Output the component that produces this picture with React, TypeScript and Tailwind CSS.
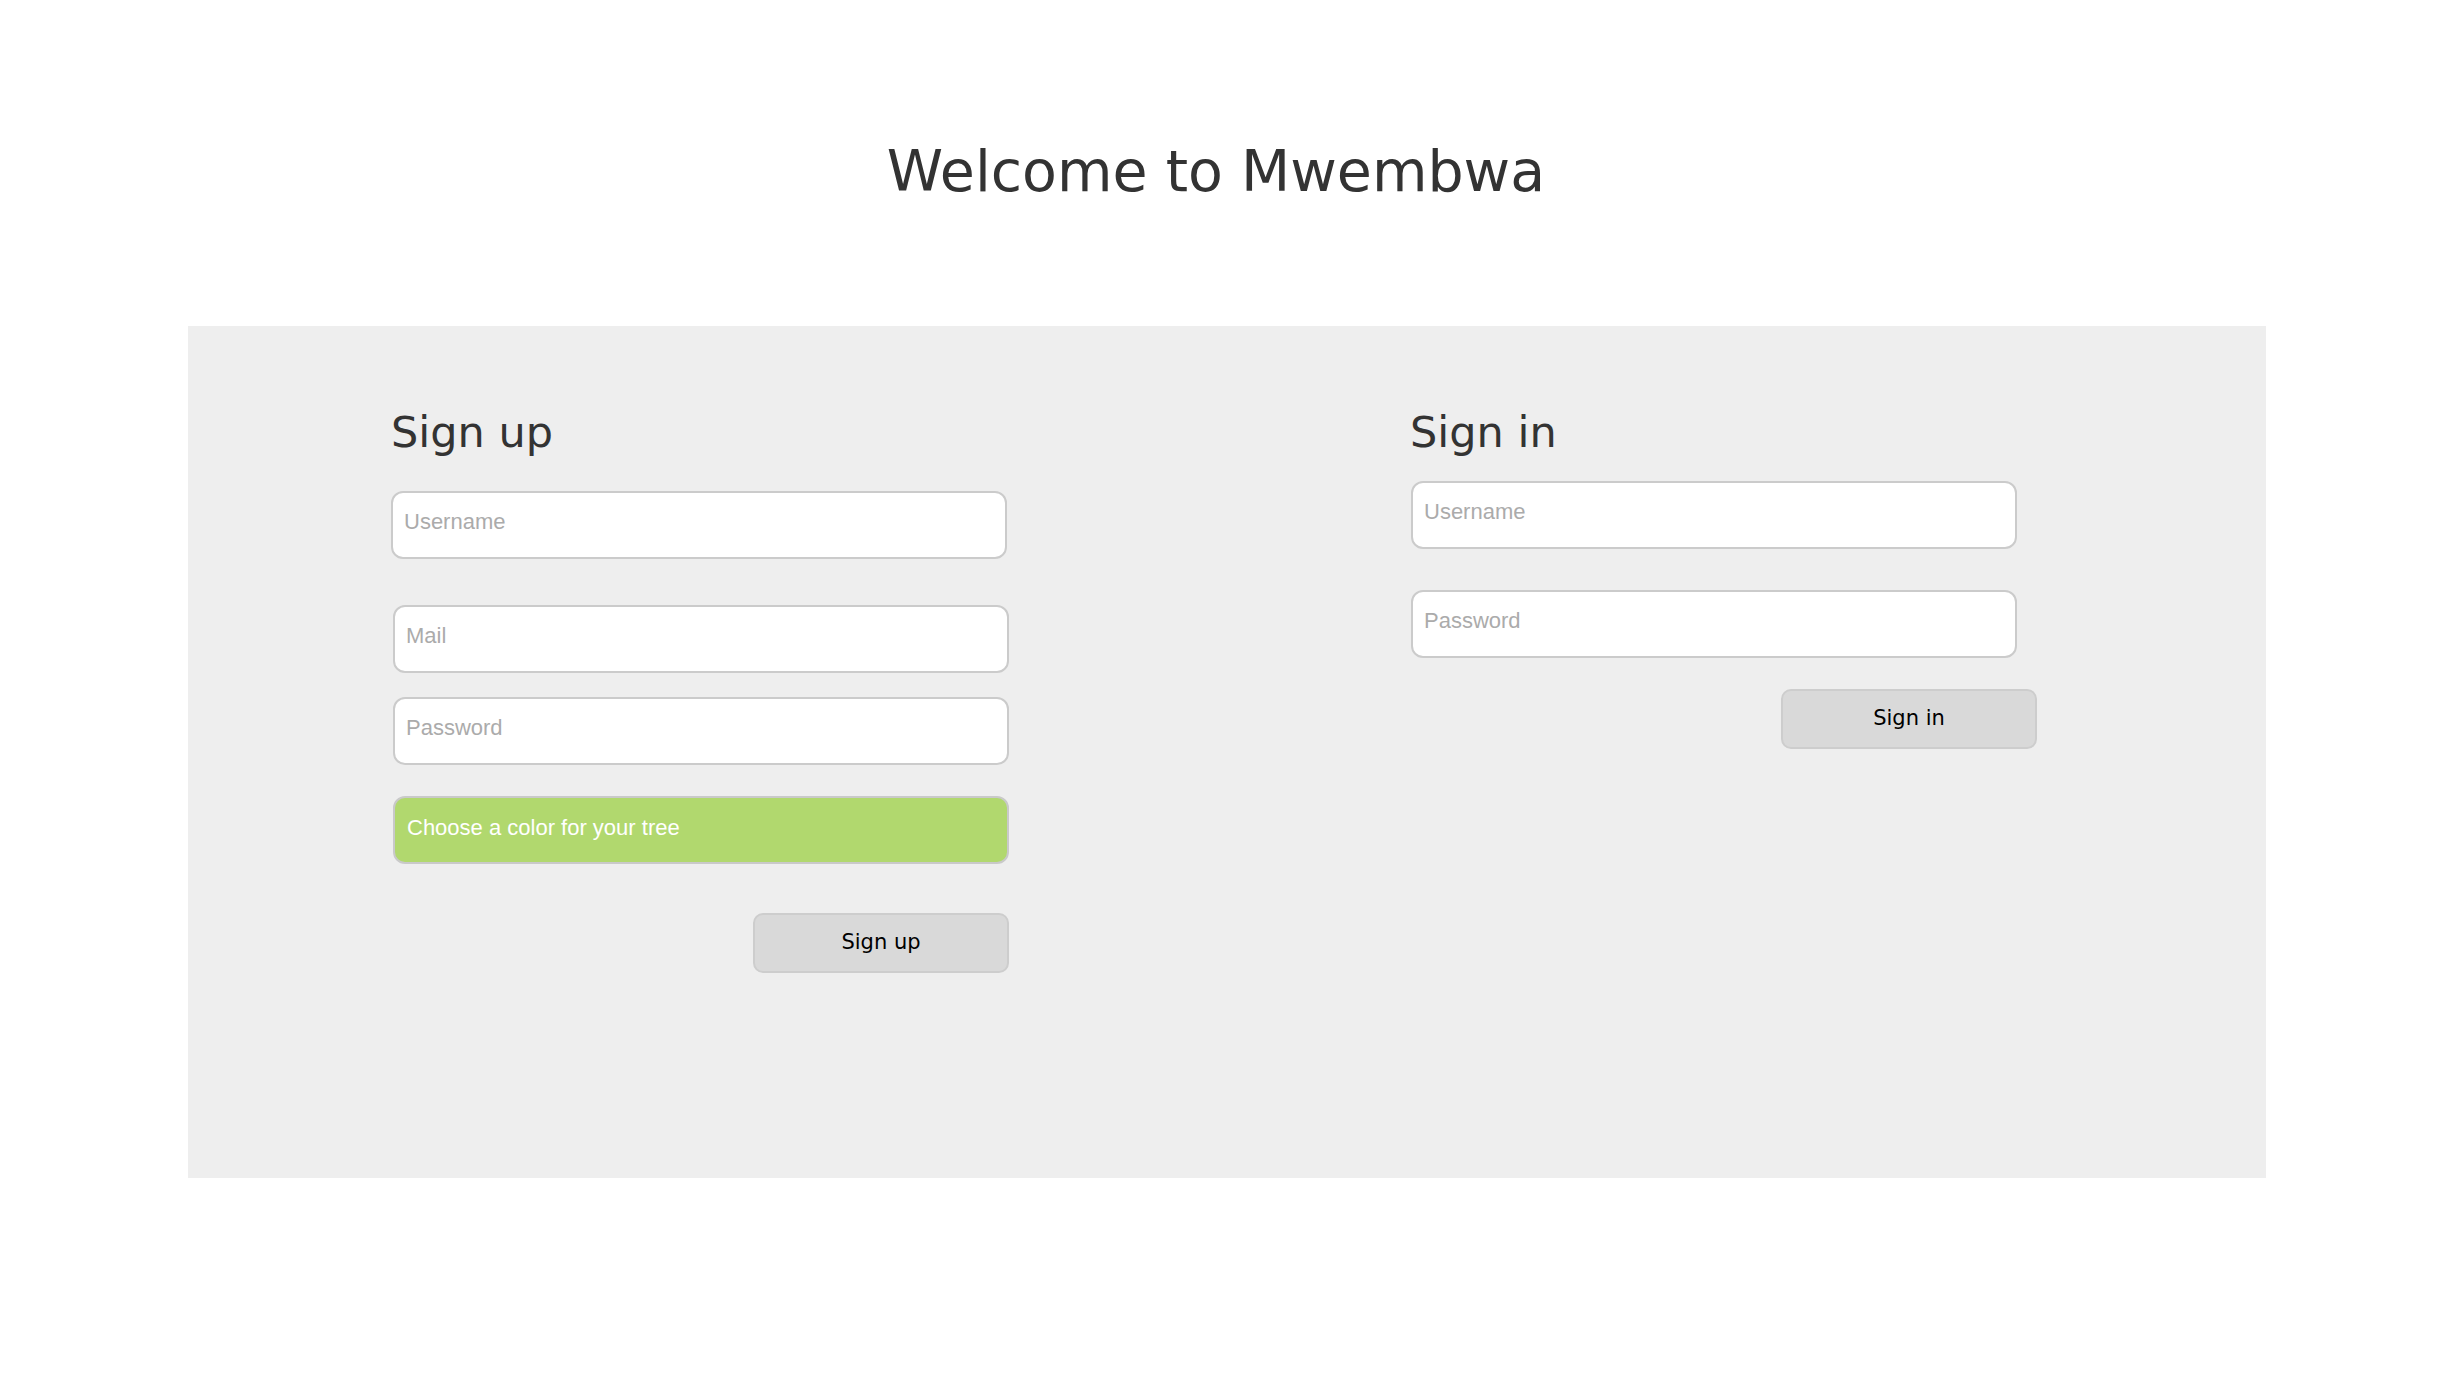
import React from "react";

const inputCls =
  "block h-[68px] rounded-[12px] border-2 border-[#cbcbcb] bg-white pl-[11px] pr-3 pb-[6px] text-[22px] text-[#333] placeholder:text-[#ababab] outline-none font-['Liberation_Sans',Arial,sans-serif]";

const btnCls =
  "h-[60px] w-[256px] rounded-[10px] border-2 border-[#cdcdcd] bg-[#d9d9d9] text-[21px] text-black font-['DejaVu_Sans',Verdana,sans-serif]";

export default function App() {
  return (
    <div className="min-h-[1382px] bg-white text-[#333] font-['DejaVu_Sans',Verdana,sans-serif]">
      <header className="h-[326px] pt-[143px] pr-[22px]">
        <h1 className="text-center text-[57px] leading-none font-normal text-[#333]">
          Welcome to Mwembwa
        </h1>
      </header>
      <main className="mx-[188px] flex h-[852px] bg-[#eeeeee]">
        <section className="w-[1222px] pl-[203px] pt-[85px]">
          <div className="flex w-[618px] flex-col">
            <h2 className="text-[43px] leading-none font-normal text-[#333]">Sign up</h2>
            <input className={`${inputCls} mt-[37px] w-[616px]`} placeholder="Username" />
            <input className={`${inputCls} ml-[2px] mt-[46px] w-[616px]`} placeholder="Mail" />
            <input
              type="password"
              className={`${inputCls} ml-[2px] mt-[24px] w-[616px]`}
              placeholder="Password"
            />
            <button className="ml-[2px] mt-[31px] flex h-[68px] w-[616px] items-center rounded-[12px] border-2 border-[#c9c9c9] bg-[#b1d86e] pb-[6px] pl-[12px] text-left text-[22px] text-white font-['Liberation_Sans',Arial,sans-serif]">
              Choose a color for your tree
            </button>
            <button className={`${btnCls} mt-[49px] self-end`}>Sign up</button>
          </div>
        </section>
        <section className="pt-[85px]">
          <div className="flex w-[627px] flex-col">
            <h2 className="text-[43px] leading-none font-normal text-[#333]">Sign in</h2>
            <input className={`${inputCls} ml-[1px] mt-[27px] w-[606px]`} placeholder="Username" />
            <input
              type="password"
              className={`${inputCls} ml-[1px] mt-[41px] w-[606px]`}
              placeholder="Password"
            />
            <button className={`${btnCls} mt-[31px] self-end w-[255px]`}>Sign in</button>
          </div>
        </section>
      </main>
    </div>
  );
}
